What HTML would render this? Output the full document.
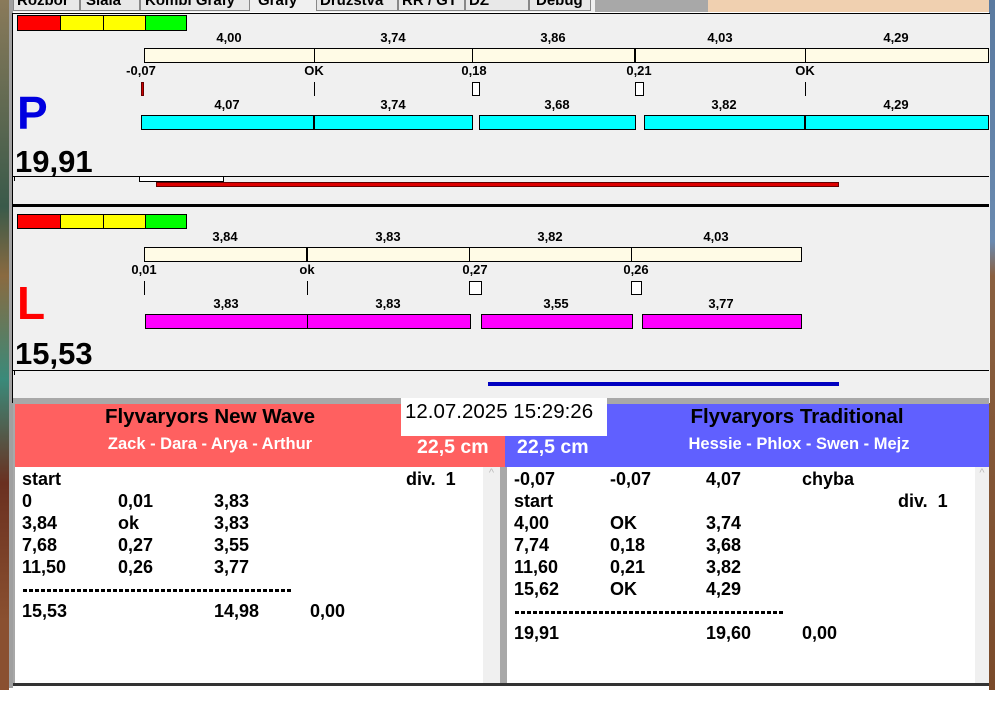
<!DOCTYPE html>
<html><head><meta charset="utf-8"><style>
*{margin:0;padding:0;box-sizing:border-box}
body{width:995px;height:701px;position:relative;overflow:hidden;background:#fff;font-family:"Liberation Sans",Arial,sans-serif;font-weight:bold;color:#000}
div{position:absolute}
.t{font-size:13px;line-height:14px;transform:translateX(-50%);white-space:nowrap}
.r{font-size:18px;line-height:22px;white-space:nowrap}
.d{height:3px;background:repeating-linear-gradient(90deg,#000 0 4px,transparent 4px 6px)}
</style></head><body>
<div style="left:0;top:0;width:9px;height:690px;background:linear-gradient(#8a7a5a,#3a5a4a 30%,#8a6a40 40%,#3a8a7a 55%,#6a3020 70%,#8a5030 90%)"></div>
<div style="left:989px;top:0;width:6px;height:690px;background:linear-gradient(#5a7aa0,#6a8ab0 35%,#8a6040 40%,#7a4a2a)"></div>
<div style="left:9px;top:0;width:4px;height:688px;background:#a0a0a0"></div>
<div style="left:13px;top:0;width:976px;height:12px;background:#f0f0f0"></div>
<div style="left:595px;top:0;width:113px;height:12px;background:#a8a8a8"></div>
<div style="left:708px;top:0;width:281px;height:12px;background:#f0d0b0"></div>
<div style="left:13px;top:-9px;font-size:15px;line-height:18px;white-space:nowrap">
<span style="display:inline-block;border:1px solid #888;background:#e8e8e8;padding:0 3px;width:67px">Rozbor</span><span style="display:inline-block;border:1px solid #888;background:#e8e8e8;padding:0 5px;width:60px">Siala</span><span style="display:inline-block;border:1px solid #888;background:#e8e8e8;padding:0 4px;width:110px">Kombi Grafy</span><span style="display:inline-block;background:#f0f0f0;padding:0 8px;width:66px">Grafy</span><span style="display:inline-block;border:1px solid #888;background:#e8e8e8;padding:0 3px;width:82px">Družstva</span><span style="display:inline-block;border:1px solid #888;background:#e8e8e8;padding:0 3px;width:67px">RR / GT</span><span style="display:inline-block;border:1px solid #888;background:#e8e8e8;padding:0 3px;width:64px">DZ</span><span style="display:inline-block;border:1px solid #888;background:#e8e8e8;padding:0 6px;width:62px">Debug</span></div>
<div style="left:12px;top:13px;width:978px;height:390px;background:#f0f0f0;border-top:1px solid #000;border-left:1px solid #000"></div>

<div style="left:17px;top:15px;width:170px;height:16px;border:1px solid #000;background:linear-gradient(90deg,#f00 0 42px,#000 42px 43px,#ff0 43px 85px,#000 85px 86px,#ff0 86px 127px,#000 127px 128px,#0f0 128px)"></div>
<div class="t" style="left:229px;top:31px">4,00</div><div class="t" style="left:393px;top:31px">3,74</div><div class="t" style="left:553px;top:31px">3,86</div><div class="t" style="left:720px;top:31px">4,03</div><div class="t" style="left:896px;top:31px">4,29</div>
<div style="left:144px;top:48px;width:845px;height:15px;border:1px solid #000;background:#fffbe6"></div>
<div style="left:314px;top:48px;width:1px;height:15px;background:#000"></div><div style="left:472px;top:48px;width:1px;height:15px;background:#000"></div><div style="left:634px;top:48px;width:2px;height:15px;background:#000"></div><div style="left:805px;top:48px;width:1px;height:15px;background:#000"></div>
<div class="t" style="left:141px;top:64px">-0,07</div><div class="t" style="left:314px;top:64px">OK</div><div class="t" style="left:474px;top:64px">0,18</div><div class="t" style="left:639px;top:64px">0,21</div><div class="t" style="left:805px;top:64px">OK</div>
<div style="left:141px;top:82px;width:3px;height:14px;background:#c00;border:1px solid #600"></div>
<div style="left:314px;top:82px;width:1px;height:14px;background:#000"></div>
<div style="left:472px;top:82px;width:8px;height:14px;border:1px solid #000;background:#fff"></div>
<div style="left:635px;top:82px;width:9px;height:14px;border:1px solid #000;background:#fff"></div>
<div style="left:805px;top:82px;width:1px;height:14px;background:#000"></div>
<div class="t" style="left:227px;top:98px">4,07</div><div class="t" style="left:393px;top:98px">3,74</div><div class="t" style="left:557px;top:98px">3,68</div><div class="t" style="left:724px;top:98px">3,82</div><div class="t" style="left:896px;top:98px">4,29</div>
<div style="left:141px;top:115px;width:332px;height:15px;border:1px solid #000;background:#0ff"></div>
<div style="left:313px;top:115px;width:2px;height:15px;background:#000"></div>
<div style="left:479px;top:115px;width:157px;height:15px;border:1px solid #000;background:#0ff"></div>
<div style="left:644px;top:115px;width:345px;height:15px;border:1px solid #000;background:#0ff"></div>
<div style="left:804px;top:115px;width:2px;height:15px;background:#000"></div>
<div style="left:17px;top:90px;font-size:46px;line-height:46px;color:#0000e0">P</div>
<div style="left:15px;top:145px;font-size:31px;line-height:34px">19,91</div>
<div style="left:13px;top:176px;width:976px;height:1px;background:#000"></div>
<div style="left:14px;top:177px;width:1px;height:4px;background:#000"></div>
<div style="left:139px;top:176px;width:85px;height:6px;border:1px solid #000;background:#fff"></div>
<div style="left:156px;top:182px;width:683px;height:5px;background:#d00;border:1px solid #600"></div>
<div style="left:13px;top:204px;width:976px;height:3px;background:#000"></div>

<div style="left:17px;top:214px;width:170px;height:15px;border:1px solid #000;background:linear-gradient(90deg,#f00 0 42px,#000 42px 43px,#ff0 43px 85px,#000 85px 86px,#ff0 86px 127px,#000 127px 128px,#0f0 128px)"></div>
<div class="t" style="left:225px;top:230px">3,84</div><div class="t" style="left:388px;top:230px">3,83</div><div class="t" style="left:550px;top:230px">3,82</div><div class="t" style="left:716px;top:230px">4,03</div>
<div style="left:144px;top:247px;width:658px;height:15px;border:1px solid #000;background:#fffbe6"></div>
<div style="left:306px;top:247px;width:2px;height:15px;background:#000"></div><div style="left:469px;top:247px;width:1px;height:15px;background:#000"></div><div style="left:631px;top:247px;width:1px;height:15px;background:#000"></div>
<div class="t" style="left:144px;top:263px">0,01</div><div class="t" style="left:307px;top:263px">ok</div><div class="t" style="left:475px;top:263px">0,27</div><div class="t" style="left:636px;top:263px">0,26</div>
<div style="left:144px;top:281px;width:1px;height:14px;background:#000"></div>
<div style="left:307px;top:281px;width:1px;height:14px;background:#000"></div>
<div style="left:469px;top:281px;width:13px;height:14px;border:1px solid #000;background:#fff"></div>
<div style="left:631px;top:281px;width:11px;height:14px;border:1px solid #000;background:#fff"></div>
<div class="t" style="left:226px;top:297px">3,83</div><div class="t" style="left:388px;top:297px">3,83</div><div class="t" style="left:556px;top:297px">3,55</div><div class="t" style="left:721px;top:297px">3,77</div>
<div style="left:145px;top:314px;width:326px;height:15px;border:1px solid #000;background:#f0f"></div>
<div style="left:307px;top:314px;width:1px;height:15px;background:#000"></div>
<div style="left:481px;top:314px;width:152px;height:15px;border:1px solid #000;background:#f0f"></div>
<div style="left:642px;top:314px;width:160px;height:15px;border:1px solid #000;background:#f0f"></div>
<div style="left:17px;top:280px;font-size:46px;line-height:46px;color:#f00">L</div>
<div style="left:15px;top:337px;font-size:31px;line-height:34px">15,53</div>
<div style="left:13px;top:370px;width:976px;height:1px;background:#000"></div>
<div style="left:14px;top:371px;width:1px;height:4px;background:#000"></div>
<div style="left:488px;top:382px;width:351px;height:4px;background:#0000c0"></div>

<div style="left:13px;top:398px;width:976px;height:288px;background:#a8a8a8"></div>
<div style="left:15px;top:404px;width:490px;height:63px;background:#ff6060"></div>
<div style="left:505px;top:404px;width:484px;height:63px;background:#6060ff"></div>
<div style="left:15px;top:405px;width:390px;text-align:center;font-size:20.5px;line-height:24px">Flyvaryors New Wave</div>
<div style="left:15px;top:434px;width:390px;text-align:center;font-size:16.5px;line-height:20px;color:#fff">Zack - Dara - Arya - Arthur</div>
<div style="left:401px;top:398px;width:206px;height:38px;background:#fff"></div>
<div style="left:405px;top:400px;font-size:20.5px;line-height:24px;font-weight:normal">12.07.2025 15:29:26</div>
<div style="left:417px;top:436px;font-size:19.5px;line-height:22px;color:#fff">22,5 cm</div>
<div style="left:517px;top:436px;font-size:19.5px;line-height:22px;color:#fff">22,5 cm</div>
<div style="left:607px;top:405px;width:380px;text-align:center;font-size:20.5px;line-height:24px">Flyvaryors Traditional</div>
<div style="left:607px;top:434px;width:384px;text-align:center;font-size:16.5px;line-height:20px;color:#fff">Hessie - Phlox - Swen - Mejz</div>
<div style="left:15px;top:467px;width:468px;height:216px;background:#fff"></div>
<div style="left:483px;top:467px;width:17px;height:216px;background:#f0f0f0;color:#bbb;font-size:11px;text-align:center;font-weight:normal">^</div>
<div style="left:507px;top:467px;width:468px;height:216px;background:#fff"></div>
<div style="left:975px;top:467px;width:14px;height:216px;background:#f0f0f0;color:#bbb;font-size:11px;text-align:center;font-weight:normal">^</div>
<div style="left:13px;top:683px;width:976px;height:3px;background:#333"></div>

<div class="r" style="left:22px;top:468px">start</div><div class="r" style="left:406px;top:468px">div.&nbsp; 1</div>
<div class="r" style="left:22px;top:490px">0</div><div class="r" style="left:118px;top:490px">0,01</div><div class="r" style="left:214px;top:490px">3,83</div>
<div class="r" style="left:22px;top:512px">3,84</div><div class="r" style="left:118px;top:512px">ok</div><div class="r" style="left:214px;top:512px">3,83</div>
<div class="r" style="left:22px;top:534px">7,68</div><div class="r" style="left:118px;top:534px">0,27</div><div class="r" style="left:214px;top:534px">3,55</div>
<div class="r" style="left:22px;top:556px">11,50</div><div class="r" style="left:118px;top:556px">0,26</div><div class="r" style="left:214px;top:556px">3,77</div>
<div class="d" style="left:23px;top:589px;width:270px"></div>
<div class="r" style="left:22px;top:600px">15,53</div><div class="r" style="left:214px;top:600px">14,98</div><div class="r" style="left:310px;top:600px">0,00</div>

<div class="r" style="left:514px;top:468px">-0,07</div><div class="r" style="left:610px;top:468px">-0,07</div><div class="r" style="left:706px;top:468px">4,07</div><div class="r" style="left:802px;top:468px">chyba</div>
<div class="r" style="left:514px;top:490px">start</div><div class="r" style="left:898px;top:490px">div.&nbsp; 1</div>
<div class="r" style="left:514px;top:512px">4,00</div><div class="r" style="left:610px;top:512px">OK</div><div class="r" style="left:706px;top:512px">3,74</div>
<div class="r" style="left:514px;top:534px">7,74</div><div class="r" style="left:610px;top:534px">0,18</div><div class="r" style="left:706px;top:534px">3,68</div>
<div class="r" style="left:514px;top:556px">11,60</div><div class="r" style="left:610px;top:556px">0,21</div><div class="r" style="left:706px;top:556px">3,82</div>
<div class="r" style="left:514px;top:578px">15,62</div><div class="r" style="left:610px;top:578px">OK</div><div class="r" style="left:706px;top:578px">4,29</div>
<div class="d" style="left:515px;top:611px;width:270px"></div>
<div class="r" style="left:514px;top:622px">19,91</div><div class="r" style="left:706px;top:622px">19,60</div><div class="r" style="left:802px;top:622px">0,00</div>
</body></html>
